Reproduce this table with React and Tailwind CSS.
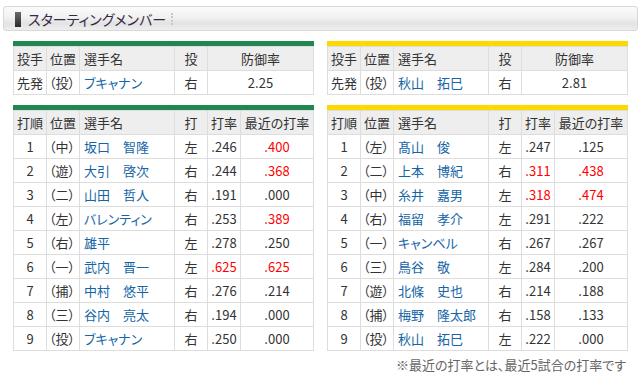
const BLUE = "text-[#1565a6]";

const pitcherCols = ["w-[33px]", "w-[33px]", "w-[95px]", "w-[33px]", "w-[106px]"];
const batCols = ["w-[33px]", "w-[33px]", "w-[95px]", "w-[33px]", "w-[33px]", "w-[73px]"];

function Cell({ w, kind, red, children }) {
  let align = "justify-center";
  let color = "";
  if (kind === "pos") align = "justify-start pl-[2px]";
  if (kind === "name") {
    align = "justify-start pl-[4px]";
    color = BLUE;
  }
  if (kind === "namehead") align = "justify-start pl-[4px]";
  if (red) color = "text-[#ff0000]";
  return (
    <div
      className={`${w} shrink-0 border-r border-[#dddddd] flex items-center whitespace-nowrap overflow-hidden ${align} ${color}`}
    >
      {children}
    </div>
  );
}

function Row({ head, children }) {
  return (
    <div
      className={`flex h-6 border-b border-[#dddddd] text-[13px] leading-none ${
        head ? "bg-[#eeeeee]" : "bg-white"
      }`}
    >
      {children}
    </div>
  );
}

function Table({ color, children }) {
  return (
    <div className="w-[301px]">
      <div className={`h-[5px] ${color}`} />
      <div className="border-l border-t border-[#dddddd]">{children}</div>
    </div>
  );
}

function PitcherTable({ color, name, hand, era }) {
  return (
    <Table color={color}>
      <Row head>
        <Cell w={pitcherCols[0]}>投手</Cell>
        <Cell w={pitcherCols[1]}>位置</Cell>
        <Cell w={pitcherCols[2]} kind="namehead">選手名</Cell>
        <Cell w={pitcherCols[3]}>投</Cell>
        <Cell w={pitcherCols[4]}>防御率</Cell>
      </Row>
      <Row>
        <Cell w={pitcherCols[0]}>先発</Cell>
        <Cell w={pitcherCols[1]} kind="pos">（投）</Cell>
        <Cell w={pitcherCols[2]} kind="name">{name}</Cell>
        <Cell w={pitcherCols[3]}>{hand}</Cell>
        <Cell w={pitcherCols[4]}>{era}</Cell>
      </Row>
    </Table>
  );
}

function BatTable({ color, rows }) {
  return (
    <Table color={color}>
      <Row head>
        <Cell w={batCols[0]}>打順</Cell>
        <Cell w={batCols[1]}>位置</Cell>
        <Cell w={batCols[2]} kind="namehead">選手名</Cell>
        <Cell w={batCols[3]}>打</Cell>
        <Cell w={batCols[4]}>打率</Cell>
        <Cell w={batCols[5]}>最近の打率</Cell>
      </Row>
      {rows.map((r, i) => (
        <Row key={i}>
          <Cell w={batCols[0]}>{i + 1}</Cell>
          <Cell w={batCols[1]} kind="pos">（{r[0]}）</Cell>
          <Cell w={batCols[2]} kind="name">{r[1]}</Cell>
          <Cell w={batCols[3]}>{r[2]}</Cell>
          <Cell w={batCols[4]} red={r[4]}>{r[3]}</Cell>
          <Cell w={batCols[5]} red={r[6]}>{r[5]}</Cell>
        </Row>
      ))}
    </Table>
  );
}

const leftRows = [
  ["中", "坂口　智隆", "左", ".246", false, ".400", true],
  ["遊", "大引　啓次", "右", ".244", false, ".368", true],
  ["二", "山田　哲人", "右", ".191", false, ".000", false],
  ["左", "バレンティン", "右", ".253", false, ".389", true],
  ["右", "雄平", "左", ".278", false, ".250", false],
  ["一", "武内　晋一", "左", ".625", true, ".625", true],
  ["捕", "中村　悠平", "右", ".276", false, ".214", false],
  ["三", "谷内　亮太", "右", ".194", false, ".000", false],
  ["投", "ブキャナン", "右", ".250", false, ".000", false],
];

const rightRows = [
  ["左", "髙山　俊", "左", ".247", false, ".125", false],
  ["二", "上本　博紀", "右", ".311", true, ".438", true],
  ["中", "糸井　嘉男", "左", ".318", true, ".474", true],
  ["右", "福留　孝介", "左", ".291", false, ".222", false],
  ["一", "キャンベル", "右", ".267", false, ".267", false],
  ["三", "鳥谷　敬", "左", ".284", false, ".200", false],
  ["遊", "北條　史也", "右", ".214", false, ".188", false],
  ["捕", "梅野　隆太郎", "右", ".158", false, ".133", false],
  ["投", "秋山　拓巳", "左", ".222", false, ".000", false],
];

export default function App() {
  return (
    <div className="w-[641px] h-[389px] bg-white px-[3px] pt-[6px] font-['Noto_Sans_CJK_JP','Noto_Sans_CJK_SC',sans-serif] text-[#333333] [font-feature-settings:'palt']">
      <div className="h-[25px] rounded-[3px] border border-[#d8d8d8] bg-[linear-gradient(to_bottom,#fbfbfb_0%,#f1f1f1_45%,#e3e3e3_72%,#eeeeee_100%)] flex items-center pl-[11px]">
        <div className="w-[6px] h-[15px] mt-[1px] bg-[linear-gradient(to_bottom,#6a6a6a,#2a2a2a)]" />
        <span className="ml-[7px] text-[14px] leading-none text-[#352a45]">スターティングメンバー</span>
        <div className="ml-[5px] h-[12px] border-l-2 border-dotted border-[#c8c8c8]" />
      </div>
      <div className="px-[10px] pt-[10px]">
        <div className="flex gap-[13px] items-start">
          <PitcherTable color="bg-[#21864f]" name="ブキャナン" hand="右" era="2.25" />
          <PitcherTable color="bg-[#fcd900]" name="秋山　拓巳" hand="右" era="2.81" />
        </div>
        <div className="flex gap-[13px] items-start mt-[10px]">
          <BatTable color="bg-[#21864f]" rows={leftRows} />
          <BatTable color="bg-[#fcd900]" rows={rightRows} />
        </div>
        <div className="mt-[5px] pr-[2px] text-right text-[13px] leading-[18px] text-[#666666]">
          ※最近の打率とは、最近5試合の打率です
        </div>
      </div>
    </div>
  );
}
